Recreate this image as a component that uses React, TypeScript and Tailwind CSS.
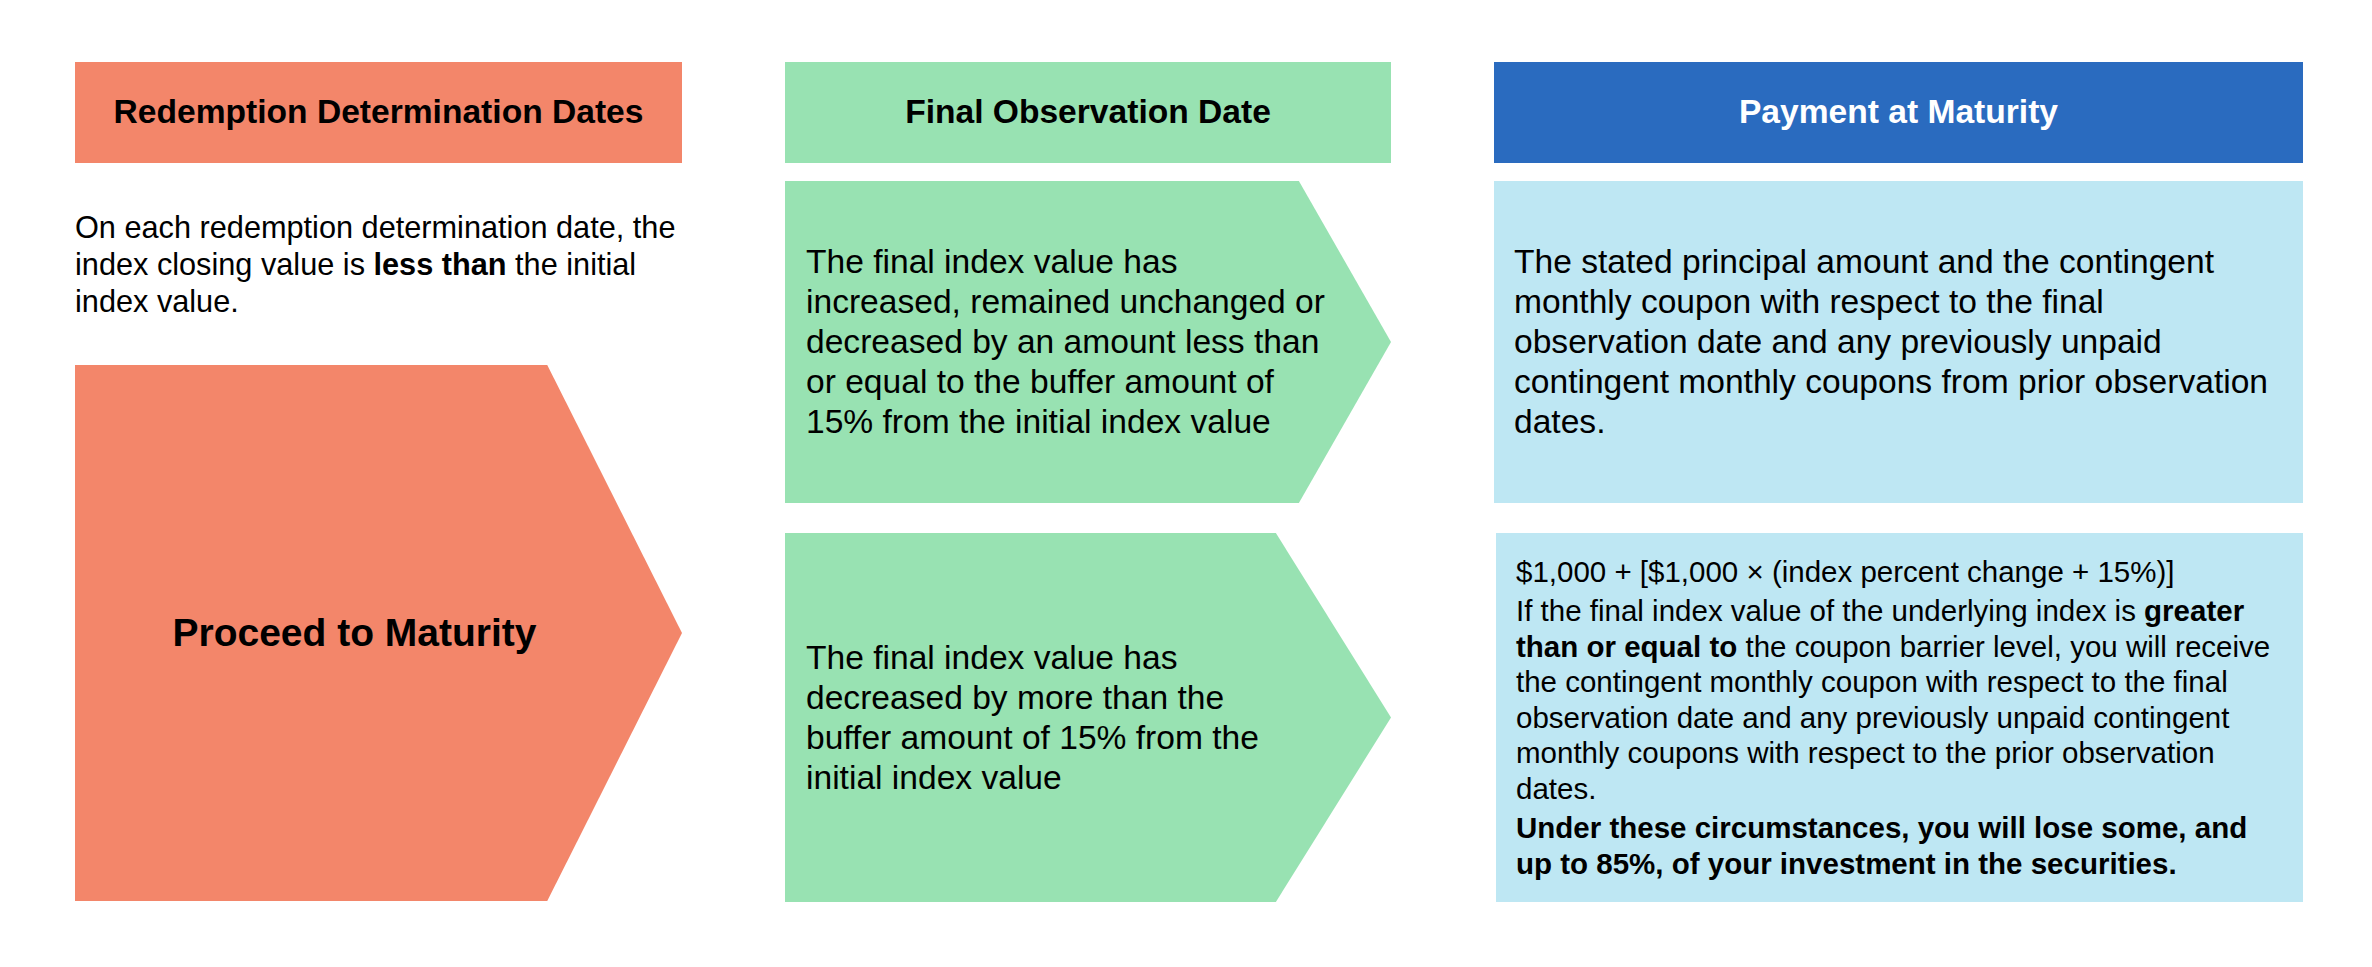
export default function App() {
    return (
        <div className="w-[2372px] h-[967px] bg-white text-black font-['Liberation_Sans',Arial,sans-serif]">
            <div className="flex gap-[103px] pl-[75px] pt-[62px]">
                {/* Column 1 */}
                <div className="w-[607px] flex flex-col">
                    <div className="h-[101px] bg-[#f3866a] flex items-center justify-center text-[33.6px] font-bold">
                        Redemption Determination Dates
                    </div>
                    <p className="mt-[46px] text-[30.7px] leading-[37px]">
                        On each redemption determination date, the
                        <br />
                        index closing value is <b>less than</b> the initial
                        <br />
                        index value.
                    </p>
                    <div className="mt-[45px] h-[536px] bg-[#f3866a] [clip-path:polygon(0_0,77.8%_0,100%_50%,77.8%_100%,0_100%)] flex items-center justify-center pr-[48px] text-[39px] font-bold">
                        Proceed to Maturity
                    </div>
                </div>

                {/* Column 2 */}
                <div className="w-[606px] flex flex-col">
                    <div className="h-[101px] bg-[#98e2b2] flex items-center justify-center text-[33.6px] font-bold">
                        Final Observation Date
                    </div>
                    <div className="mt-[18px] h-[322px] bg-[#98e2b2] [clip-path:polygon(0_0,84.8%_0,100%_50%,84.8%_100%,0_100%)] flex items-center pl-[21px] text-[33.6px] leading-[40px]">
                        <p>
                            The final index value has
                            <br />
                            increased, remained unchanged or
                            <br />
                            decreased by an amount less than
                            <br />
                            or equal to the buffer amount of
                            <br />
                            15% from the initial index value
                        </p>
                    </div>
                    <div className="mt-[30px] h-[369px] bg-[#98e2b2] [clip-path:polygon(0_0,81%_0,100%_50%,81%_100%,0_100%)] flex items-center pl-[21px] text-[33.6px] leading-[40px]">
                        <p>
                            The final index value has
                            <br />
                            decreased by more than the
                            <br />
                            buffer amount of 15% from the
                            <br />
                            initial index value
                        </p>
                    </div>
                </div>

                {/* Column 3 */}
                <div className="w-[809px] flex flex-col">
                    <div className="h-[101px] bg-[#2a6bbf] flex items-center justify-center text-[33.6px] font-bold text-white">
                        Payment at Maturity
                    </div>
                    <div className="mt-[18px] h-[322px] bg-[#bee7f3] flex items-center px-[20px] text-[33.6px] leading-[40px]">
                        <p>
                            The stated principal amount and the contingent
                            <br />
                            monthly coupon with respect to the final
                            <br />
                            observation date and any previously unpaid
                            <br />
                            contingent monthly coupons from prior observation
                            <br />
                            dates.
                        </p>
                    </div>
                    <div className="mt-[30px] ml-[2px] h-[369px] bg-[#bee7f3] flex flex-col justify-center gap-[4px] px-[20px] text-[29.5px] leading-[35.5px]">
                        <p>$1,000 + [$1,000 × (index percent change + 15%)]</p>
                        <p>
                            If the final index value of the underlying index is <b>greater</b>
                            <br />
                            <b>than or equal to</b> the coupon barrier level, you will receive
                            <br />
                            the contingent monthly coupon with respect to the final
                            <br />
                            observation date and any previously unpaid contingent
                            <br />
                            monthly coupons with respect to the prior observation
                            <br />
                            dates.
                        </p>
                        <p className="font-bold">
                            Under these circumstances, you will lose some, and
                            <br />
                            up to 85%, of your investment in the securities.
                        </p>
                    </div>
                </div>
            </div>
        </div>
    );
}
